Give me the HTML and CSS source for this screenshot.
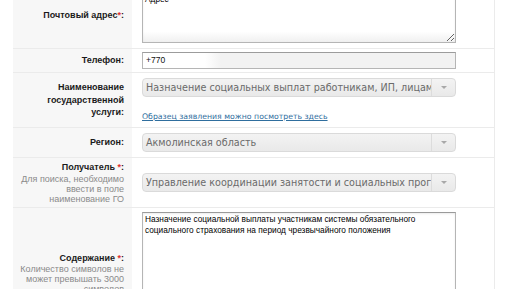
FILE: index.html
```html
<!DOCTYPE html>
<html lang="ru">
<head>
<meta charset="utf-8">
<link rel="stylesheet" href="styles.css">
</head>
<body>
<div class="form">
  <div class="row r-addr">
    <div class="label"><div class="lt">Почтовый адрес<span class="req">*</span>:</div></div>
    <div class="field"><textarea class="ta ta-addr">Адрес</textarea></div>
  </div>
  <div class="row r-phone">
    <div class="label"><div class="lt">Телефон:</div></div>
    <div class="field"><div class="input"><span>+770</span></div></div>
  </div>
  <div class="row r-service">
    <div class="label"><div class="lt">Наименование государственной услуги:</div></div>
    <div class="field">
      <div class="select"><span class="sel-text">Назначение социальных выплат работникам, ИП, лицам</span><span class="sel-arrow"></span></div>
      <a class="link" href="#">Образец заявления можно посмотреть здесь</a>
    </div>
  </div>
  <div class="row r-region">
    <div class="label"><div class="lt">Регион:</div></div>
    <div class="field"><div class="select"><span class="sel-text">Акмолинская область</span><span class="sel-arrow"></span></div></div>
  </div>
  <div class="row r-recipient">
    <div class="label">
      <div class="lt">Получатель <span class="req">*</span>:</div>
      <div class="hint">Для поиска, необходимо ввести в поле наименование ГО</div>
    </div>
    <div class="field"><div class="select"><span class="sel-text">Управление координации занятости и социальных программ</span><span class="sel-arrow"></span></div></div>
  </div>
  <div class="row r-content">
    <div class="label">
      <div class="lt">Содержание <span class="req">*</span>:</div>
      <div class="hint">Количество символов не может превышать 3000 символов</div>
    </div>
    <div class="field"><textarea class="ta ta-content">Назначение социальной выплаты участникам системы обязательного социального страхования на период чрезвычайного положения</textarea></div>
  </div>
</div>
</body>
</html>
```

FILE: styles.css
```css
* { box-sizing: border-box; }
html, body { margin: 0; background: #fff; }
body {
  font-family: "Liberation Sans", Arial, sans-serif;
  overflow: hidden;
  height: 289px;
}
.form {
  margin: -17px 0 0 13px;
  width: 482px;
  border-right: 1px solid #ebebeb;
}
.row {
  display: grid;
  grid-template-columns: 119px 1fr;
  border-bottom: 1px solid #ebebeb;
}
.label {
  background: #f7f7f7;
  text-align: right;
  padding-right: 8px;
  display: flex;
  flex-direction: column;
  justify-content: center;
}
.lt {
  font-weight: bold;
  font-size: 9px;
  line-height: 12.5px;
  color: #1a1a1a;
}
.req { color: #e03030; }
.hint {
  font-size: 9px;
  line-height: 10px;
  color: #8a8a8a;
  padding-left: 6px;
}
.field {
  padding: 0 0 0 10px;
  display: flex;
  flex-direction: column;
  justify-content: center;
}
.ta {
  display: block;
  width: 314px;
  border: 1px solid #b5b5b5;
  border-top-color: #9a9a9a;
  box-shadow: inset 0 1px 2px rgba(0,0,0,0.08);
  font-family: "Liberation Sans", Arial, sans-serif;
  font-size: 8.3px;
  line-height: 11px;
  color: #000;
  padding: 1px 2px;
  margin: 0;
  background: #fff;
  resize: vertical;
}
.ta-addr {
  height: 55px;
  padding-top: 5px;
  background: linear-gradient(#fff 80%, #f0f0f0);
}
.r-addr { height: 66px; }
.r-phone { height: 24px; }
.input {
  width: 314px;
  height: 17px;
  border: 1px solid #b5b5b5;
  border-top-color: #9c9c9c;
  background: linear-gradient(to right, #fff 0, #fff 62px, #f2f2f2 78px, #f2f2f2 100%);
  font-size: 8.5px;
  line-height: 15px;
  padding-left: 3px;
  color: #111;
}
.r-service { height: 55px; }
.r-service .field { justify-content: flex-start; padding-top: 5px; }
.select {
  width: 314px;
  height: 19px;
  border: 1px solid #dadada;
  border-radius: 4px;
  background: linear-gradient(#f3f3f3, #e9e9e9);
  display: flex;
  align-items: stretch;
  overflow: hidden;
}
.sel-text {
  flex: 1;
  overflow: hidden;
  white-space: nowrap;
  font-family: "DejaVu Sans", Verdana, sans-serif;
  font-size: 9.6px;
  line-height: 17px;
  color: #6a6a6a;
  padding-left: 3px;
}
.sel-arrow {
  width: 24px;
  border-left: 1px solid #dcdcdc;
  position: relative;
}
.sel-arrow::after {
  content: "";
  position: absolute;
  left: 9px;
  top: 7px;
  border-left: 3px solid transparent;
  border-right: 3px solid transparent;
  border-top: 3px solid #a8a8a8;
}
.link {
  margin-top: 14px;
  font-family: "DejaVu Sans", Verdana, sans-serif;
  font-size: 7.75px;
  line-height: 11px;
  color: #2f6e9e;
  text-decoration: underline;
}
.r-region { height: 30px; }
.r-recipient { height: 50px; }
.r-content { height: 131px; }
.ta-content { height: 122px; }
```
